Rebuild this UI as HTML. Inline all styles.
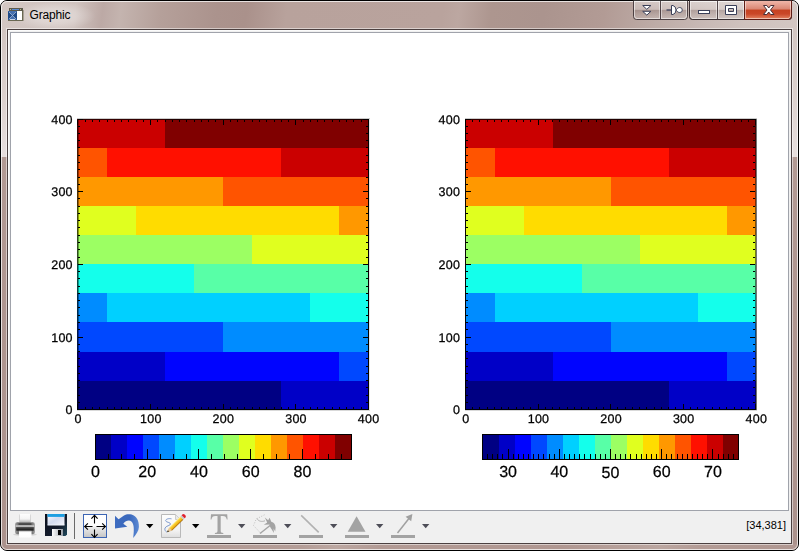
<!DOCTYPE html>
<html><head><meta charset="utf-8"><title>Graphic</title>
<style>
html,body{margin:0;padding:0;background:#fff;}
body{width:799px;height:551px;overflow:hidden;position:relative;font-family:"Liberation Sans",sans-serif;}
#win{position:absolute;left:0;top:0;width:797px;height:549px;border:1px solid #000;border-radius:7px;overflow:hidden;
 background:linear-gradient(180deg,#d0c3bf 0px,#d2c6c2 29px,#ddd2cf 100px,#e7dfde 156px,#b29a94 156px,#af9690 300px,#ab928c 549px);}
#win:after{content:"";position:absolute;left:0;top:0;right:0;bottom:0;border:1px solid rgba(255,255,255,.72);border-radius:6px;}
#tb{position:absolute;left:0;top:0;width:797px;height:28px;
 background:linear-gradient(97deg,#d3c7c3 0px,#d0c3bf 75px,#bca9a5 102px,#c4b4af 120px,#b5a09a 160px,#ab938d 215px,#aa918b 245px,#b8a29c 285px,#b9a39d 440px,#bca7a1 456px,#ad968f 488px,#ab948e 540px,#b29b95 600px,#bdaba6 650px,#c8b9b5 700px,#cfc2be 740px,#d3c7c3 797px);}
#bot{position:absolute;left:0;bottom:0;width:797px;height:6px;
 background:linear-gradient(90deg,#ab928c 0px,#b29a94 150px,#b49d97 300px,#bca7a1 335px,#b29a94 380px,#b09791 560px,#bba6a0 660px,#b39b95 700px,#b09791 797px);}
#glow{position:absolute;left:14px;top:1px;width:80px;height:28px;background:radial-gradient(ellipse at center,rgba(255,255,255,.42) 0%,rgba(255,255,255,.25) 40%,rgba(255,255,255,0) 72%);}
#client{position:absolute;left:7px;top:29px;width:783px;height:513px;border:1px solid #4b4040;background:#f0f0f0;box-shadow:0 0 0 1px rgba(255,255,255,.5);}
#client:before{content:"";position:absolute;left:0;top:0;right:0;bottom:0;border:1px solid #fbfbfb;border-right-color:#f0f0f0;border-bottom-color:#f0f0f0}
#draw{position:absolute;left:2px;top:2px;width:777px;height:477px;border:1px solid #a0a3ab;background:#fff;}
#title{position:absolute;left:29.600px;top:8px;font-size:12px;color:#000;line-height:15px;letter-spacing:-.2px;}
#status{position:absolute;right:13px;top:519px;font-size:11px;color:#000;line-height:13px;}
svg{position:absolute;left:0;top:0;}
#chart{will-change:transform;}
.ax{font-size:12.5px;letter-spacing:.25px;stroke:#000;stroke-width:.25px;font-family:"Liberation Sans",sans-serif;fill:#000}
.cb{font-size:16px;stroke:#000;stroke-width:.25px;font-family:"Liberation Sans",sans-serif;fill:#000}
</style></head><body>
<div id="win"><div id="tb"></div><div id="bot"></div><div id="glow"></div></div>
<div id="client"><div id="draw"></div></div>
<div id="title">Graphic</div>
<div id="status">[34,381]</div>
<svg id="chart" width="799" height="551" viewBox="0 0 799 551" shape-rendering="crispEdges" text-rendering="geometricPrecision">
<rect x="77" y="381" width="204" height="29" fill="#000083"/>
<rect x="281" y="381" width="88" height="29" fill="#0000c7"/>
<rect x="77" y="352" width="88" height="29" fill="#0000c7"/>
<rect x="165" y="352" width="174" height="29" fill="#0004ff"/>
<rect x="339" y="352" width="30" height="29" fill="#0048ff"/>
<rect x="77" y="322" width="146" height="30" fill="#0048ff"/>
<rect x="223" y="322" width="146" height="30" fill="#008cff"/>
<rect x="77" y="293" width="30" height="29" fill="#008cff"/>
<rect x="107" y="293" width="203" height="29" fill="#00d0ff"/>
<rect x="310" y="293" width="59" height="29" fill="#14ffeb"/>
<rect x="77" y="264" width="117" height="29" fill="#14ffeb"/>
<rect x="194" y="264" width="175" height="29" fill="#58ffa7"/>
<rect x="77" y="235" width="175" height="29" fill="#9cff63"/>
<rect x="252" y="235" width="117" height="29" fill="#e0ff1f"/>
<rect x="77" y="206" width="59" height="29" fill="#e0ff1f"/>
<rect x="136" y="206" width="203" height="29" fill="#ffdc00"/>
<rect x="339" y="206" width="30" height="29" fill="#ff9800"/>
<rect x="77" y="177" width="146" height="29" fill="#ff9800"/>
<rect x="223" y="177" width="146" height="29" fill="#ff5400"/>
<rect x="77" y="148" width="30" height="29" fill="#ff5400"/>
<rect x="107" y="148" width="174" height="29" fill="#ff1000"/>
<rect x="281" y="148" width="88" height="29" fill="#cb0000"/>
<rect x="77" y="119" width="88" height="29" fill="#cb0000"/>
<rect x="165" y="119" width="204" height="29" fill="#800000"/>
<rect x="77" y="119" width="1" height="291" fill="#000" fill-opacity="0.70"/>
<rect x="78" y="119" width="1" height="291" fill="#000" fill-opacity="0.38"/>
<rect x="368" y="119" width="1" height="291" fill="#000" fill-opacity="1.00"/>
<rect x="369" y="119" width="1" height="291" fill="#000" fill-opacity="0.10"/>
<rect x="77" y="118" width="293" height="1" fill="#000" fill-opacity="0.20"/>
<rect x="78" y="119" width="290" height="1" fill="#000" fill-opacity="0.75"/>
<rect x="78" y="409" width="290" height="1" fill="#000" fill-opacity="0.92"/>
<rect x="77" y="410" width="293" height="1" fill="#000" fill-opacity="0.15"/>
<path d="M85 409h1v-2h-1zM85 120h1v2h-1zM78 402v1h2v-1zM368 402v1h-2v-1zM92 409h1v-2h-1zM92 120h1v2h-1zM78 395v1h2v-1zM368 395v1h-2v-1zM99 409h1v-2h-1zM99 120h1v2h-1zM78 387v1h2v-1zM368 387v1h-2v-1zM107 409h1v-2h-1zM107 120h1v2h-1zM78 380v1h2v-1zM368 380v1h-2v-1zM114 409h1v-2h-1zM114 120h1v2h-1zM78 373v1h2v-1zM368 373v1h-2v-1zM121 409h1v-2h-1zM121 120h1v2h-1zM78 366v1h2v-1zM368 366v1h-2v-1zM128 409h1v-2h-1zM128 120h1v2h-1zM78 358v1h2v-1zM368 358v1h-2v-1zM136 409h1v-2h-1zM136 120h1v2h-1zM78 351v1h2v-1zM368 351v1h-2v-1zM143 409h1v-2h-1zM143 120h1v2h-1zM78 344v1h2v-1zM368 344v1h-2v-1zM150 409h1v-5h-1zM150 120h1v5h-1zM78 337v1h5v-1zM368 337v1h-5v-1zM157 409h1v-2h-1zM157 120h1v2h-1zM78 329v1h2v-1zM368 329v1h-2v-1zM165 409h1v-2h-1zM165 120h1v2h-1zM78 322v1h2v-1zM368 322v1h-2v-1zM172 409h1v-2h-1zM172 120h1v2h-1zM78 315v1h2v-1zM368 315v1h-2v-1zM179 409h1v-2h-1zM179 120h1v2h-1zM78 307v1h2v-1zM368 307v1h-2v-1zM186 409h1v-2h-1zM186 120h1v2h-1zM78 300v1h2v-1zM368 300v1h-2v-1zM194 409h1v-2h-1zM194 120h1v2h-1zM78 293v1h2v-1zM368 293v1h-2v-1zM201 409h1v-2h-1zM201 120h1v2h-1zM78 286v1h2v-1zM368 286v1h-2v-1zM208 409h1v-2h-1zM208 120h1v2h-1zM78 278v1h2v-1zM368 278v1h-2v-1zM215 409h1v-2h-1zM215 120h1v2h-1zM78 271v1h2v-1zM368 271v1h-2v-1zM223 409h1v-5h-1zM223 120h1v5h-1zM78 264v1h5v-1zM368 264v1h-5v-1zM230 409h1v-2h-1zM230 120h1v2h-1zM78 257v1h2v-1zM368 257v1h-2v-1zM237 409h1v-2h-1zM237 120h1v2h-1zM78 249v1h2v-1zM368 249v1h-2v-1zM244 409h1v-2h-1zM244 120h1v2h-1zM78 242v1h2v-1zM368 242v1h-2v-1zM252 409h1v-2h-1zM252 120h1v2h-1zM78 235v1h2v-1zM368 235v1h-2v-1zM259 409h1v-2h-1zM259 120h1v2h-1zM78 227v1h2v-1zM368 227v1h-2v-1zM266 409h1v-2h-1zM266 120h1v2h-1zM78 220v1h2v-1zM368 220v1h-2v-1zM274 409h1v-2h-1zM274 120h1v2h-1zM78 213v1h2v-1zM368 213v1h-2v-1zM281 409h1v-2h-1zM281 120h1v2h-1zM78 206v1h2v-1zM368 206v1h-2v-1zM288 409h1v-2h-1zM288 120h1v2h-1zM78 198v1h2v-1zM368 198v1h-2v-1zM295 409h1v-5h-1zM295 120h1v5h-1zM78 191v1h5v-1zM368 191v1h-5v-1zM303 409h1v-2h-1zM303 120h1v2h-1zM78 184v1h2v-1zM368 184v1h-2v-1zM310 409h1v-2h-1zM310 120h1v2h-1zM78 177v1h2v-1zM368 177v1h-2v-1zM317 409h1v-2h-1zM317 120h1v2h-1zM78 169v1h2v-1zM368 169v1h-2v-1zM324 409h1v-2h-1zM324 120h1v2h-1zM78 162v1h2v-1zM368 162v1h-2v-1zM332 409h1v-2h-1zM332 120h1v2h-1zM78 155v1h2v-1zM368 155v1h-2v-1zM339 409h1v-2h-1zM339 120h1v2h-1zM78 147v1h2v-1zM368 147v1h-2v-1zM346 409h1v-2h-1zM346 120h1v2h-1zM78 140v1h2v-1zM368 140v1h-2v-1zM353 409h1v-2h-1zM353 120h1v2h-1zM78 133v1h2v-1zM368 133v1h-2v-1zM361 409h1v-2h-1zM361 120h1v2h-1zM78 126v1h2v-1zM368 126v1h-2v-1z" fill="#000"/>
<path d="M77 119h6v1h-6zM77 409h6v1h-6zM369 119h-6v1h6zM369 409h-6v1h6zM77 119v6h1v-6zM77 410v-6h1v6zM368 119v6h1v-6zM368 410v-6h1v6z" fill="#000" fill-opacity=".8"/>
<text x="78.2" y="423.0" text-anchor="middle" class="ax">0</text>
<text x="72.8" y="414.2" text-anchor="end" class="ax">0</text>
<text x="150.8" y="423.0" text-anchor="middle" class="ax">100</text>
<text x="72.8" y="341.5" text-anchor="end" class="ax">100</text>
<text x="223.4" y="423.0" text-anchor="middle" class="ax">200</text>
<text x="72.8" y="268.8" text-anchor="end" class="ax">200</text>
<text x="296.0" y="423.0" text-anchor="middle" class="ax">300</text>
<text x="72.8" y="196.1" text-anchor="end" class="ax">300</text>
<text x="368.6" y="423.0" text-anchor="middle" class="ax">400</text>
<text x="72.8" y="124.0" text-anchor="end" class="ax">400</text>
<rect x="465" y="381" width="204" height="29" fill="#000083"/>
<rect x="669" y="381" width="87" height="29" fill="#0000c7"/>
<rect x="465" y="352" width="88" height="29" fill="#0000c7"/>
<rect x="553" y="352" width="174" height="29" fill="#0004ff"/>
<rect x="727" y="352" width="29" height="29" fill="#0048ff"/>
<rect x="465" y="322" width="146" height="30" fill="#0048ff"/>
<rect x="611" y="322" width="145" height="30" fill="#008cff"/>
<rect x="465" y="293" width="30" height="29" fill="#008cff"/>
<rect x="495" y="293" width="203" height="29" fill="#00d0ff"/>
<rect x="698" y="293" width="58" height="29" fill="#14ffeb"/>
<rect x="465" y="264" width="117" height="29" fill="#14ffeb"/>
<rect x="582" y="264" width="174" height="29" fill="#58ffa7"/>
<rect x="465" y="235" width="175" height="29" fill="#9cff63"/>
<rect x="640" y="235" width="116" height="29" fill="#e0ff1f"/>
<rect x="465" y="206" width="59" height="29" fill="#e0ff1f"/>
<rect x="524" y="206" width="203" height="29" fill="#ffdc00"/>
<rect x="727" y="206" width="29" height="29" fill="#ff9800"/>
<rect x="465" y="177" width="146" height="29" fill="#ff9800"/>
<rect x="611" y="177" width="145" height="29" fill="#ff5400"/>
<rect x="465" y="148" width="30" height="29" fill="#ff5400"/>
<rect x="495" y="148" width="174" height="29" fill="#ff1000"/>
<rect x="669" y="148" width="87" height="29" fill="#cb0000"/>
<rect x="465" y="119" width="88" height="29" fill="#cb0000"/>
<rect x="553" y="119" width="203" height="29" fill="#800000"/>
<rect x="465" y="119" width="1" height="291" fill="#000" fill-opacity="0.96"/>
<rect x="755" y="119" width="1" height="291" fill="#000" fill-opacity="0.50"/>
<rect x="756" y="119" width="1" height="291" fill="#000" fill-opacity="0.55"/>
<rect x="465" y="118" width="292" height="1" fill="#000" fill-opacity="0.20"/>
<rect x="466" y="119" width="290" height="1" fill="#000" fill-opacity="0.75"/>
<rect x="466" y="409" width="290" height="1" fill="#000" fill-opacity="0.92"/>
<rect x="465" y="410" width="292" height="1" fill="#000" fill-opacity="0.15"/>
<path d="M472 409h1v-2h-1zM472 120h1v2h-1zM466 402v1h2v-1zM755 402v1h-2v-1zM479 409h1v-2h-1zM479 120h1v2h-1zM466 395v1h2v-1zM755 395v1h-2v-1zM487 409h1v-2h-1zM487 120h1v2h-1zM466 387v1h2v-1zM755 387v1h-2v-1zM494 409h1v-2h-1zM494 120h1v2h-1zM466 380v1h2v-1zM755 380v1h-2v-1zM501 409h1v-2h-1zM501 120h1v2h-1zM466 373v1h2v-1zM755 373v1h-2v-1zM508 409h1v-2h-1zM508 120h1v2h-1zM466 366v1h2v-1zM755 366v1h-2v-1zM516 409h1v-2h-1zM516 120h1v2h-1zM466 358v1h2v-1zM755 358v1h-2v-1zM523 409h1v-2h-1zM523 120h1v2h-1zM466 351v1h2v-1zM755 351v1h-2v-1zM530 409h1v-2h-1zM530 120h1v2h-1zM466 344v1h2v-1zM755 344v1h-2v-1zM538 409h1v-5h-1zM538 120h1v5h-1zM466 337v1h5v-1zM755 337v1h-5v-1zM545 409h1v-2h-1zM545 120h1v2h-1zM466 329v1h2v-1zM755 329v1h-2v-1zM552 409h1v-2h-1zM552 120h1v2h-1zM466 322v1h2v-1zM755 322v1h-2v-1zM559 409h1v-2h-1zM559 120h1v2h-1zM466 315v1h2v-1zM755 315v1h-2v-1zM567 409h1v-2h-1zM567 120h1v2h-1zM466 307v1h2v-1zM755 307v1h-2v-1zM574 409h1v-2h-1zM574 120h1v2h-1zM466 300v1h2v-1zM755 300v1h-2v-1zM581 409h1v-2h-1zM581 120h1v2h-1zM466 293v1h2v-1zM755 293v1h-2v-1zM588 409h1v-2h-1zM588 120h1v2h-1zM466 286v1h2v-1zM755 286v1h-2v-1zM596 409h1v-2h-1zM596 120h1v2h-1zM466 278v1h2v-1zM755 278v1h-2v-1zM603 409h1v-2h-1zM603 120h1v2h-1zM466 271v1h2v-1zM755 271v1h-2v-1zM610 409h1v-5h-1zM610 120h1v5h-1zM466 264v1h5v-1zM755 264v1h-5v-1zM617 409h1v-2h-1zM617 120h1v2h-1zM466 257v1h2v-1zM755 257v1h-2v-1zM625 409h1v-2h-1zM625 120h1v2h-1zM466 249v1h2v-1zM755 249v1h-2v-1zM632 409h1v-2h-1zM632 120h1v2h-1zM466 242v1h2v-1zM755 242v1h-2v-1zM639 409h1v-2h-1zM639 120h1v2h-1zM466 235v1h2v-1zM755 235v1h-2v-1zM646 409h1v-2h-1zM646 120h1v2h-1zM466 227v1h2v-1zM755 227v1h-2v-1zM654 409h1v-2h-1zM654 120h1v2h-1zM466 220v1h2v-1zM755 220v1h-2v-1zM661 409h1v-2h-1zM661 120h1v2h-1zM466 213v1h2v-1zM755 213v1h-2v-1zM668 409h1v-2h-1zM668 120h1v2h-1zM466 206v1h2v-1zM755 206v1h-2v-1zM675 409h1v-2h-1zM675 120h1v2h-1zM466 198v1h2v-1zM755 198v1h-2v-1zM683 409h1v-5h-1zM683 120h1v5h-1zM466 191v1h5v-1zM755 191v1h-5v-1zM690 409h1v-2h-1zM690 120h1v2h-1zM466 184v1h2v-1zM755 184v1h-2v-1zM697 409h1v-2h-1zM697 120h1v2h-1zM466 177v1h2v-1zM755 177v1h-2v-1zM704 409h1v-2h-1zM704 120h1v2h-1zM466 169v1h2v-1zM755 169v1h-2v-1zM712 409h1v-2h-1zM712 120h1v2h-1zM466 162v1h2v-1zM755 162v1h-2v-1zM719 409h1v-2h-1zM719 120h1v2h-1zM466 155v1h2v-1zM755 155v1h-2v-1zM726 409h1v-2h-1zM726 120h1v2h-1zM466 147v1h2v-1zM755 147v1h-2v-1zM734 409h1v-2h-1zM734 120h1v2h-1zM466 140v1h2v-1zM755 140v1h-2v-1zM741 409h1v-2h-1zM741 120h1v2h-1zM466 133v1h2v-1zM755 133v1h-2v-1zM748 409h1v-2h-1zM748 120h1v2h-1zM466 126v1h2v-1zM755 126v1h-2v-1z" fill="#000"/>
<path d="M465 119h6v1h-6zM465 409h6v1h-6zM756 119h-6v1h6zM756 409h-6v1h6zM465 119v6h1v-6zM465 410v-6h1v6zM755 119v6h1v-6zM755 410v-6h1v6z" fill="#000" fill-opacity=".8"/>
<text x="465.9" y="423.0" text-anchor="middle" class="ax">0</text>
<text x="460.1" y="414.2" text-anchor="end" class="ax">0</text>
<text x="538.5" y="423.0" text-anchor="middle" class="ax">100</text>
<text x="460.1" y="341.5" text-anchor="end" class="ax">100</text>
<text x="611.1" y="423.0" text-anchor="middle" class="ax">200</text>
<text x="460.1" y="268.8" text-anchor="end" class="ax">200</text>
<text x="683.7" y="423.0" text-anchor="middle" class="ax">300</text>
<text x="460.1" y="196.1" text-anchor="end" class="ax">300</text>
<text x="756.3" y="423.0" text-anchor="middle" class="ax">400</text>
<text x="460.1" y="124.0" text-anchor="end" class="ax">400</text>
<rect x="95.00" y="434.00" width="16.30" height="25.00" fill="#000083"/>
<rect x="111.00" y="434.00" width="16.30" height="25.00" fill="#0000c7"/>
<rect x="127.00" y="434.00" width="16.30" height="25.00" fill="#0004ff"/>
<rect x="143.00" y="434.00" width="16.30" height="25.00" fill="#0048ff"/>
<rect x="159.00" y="434.00" width="16.30" height="25.00" fill="#008cff"/>
<rect x="175.00" y="434.00" width="16.30" height="25.00" fill="#00d0ff"/>
<rect x="191.00" y="434.00" width="16.30" height="25.00" fill="#14ffeb"/>
<rect x="207.00" y="434.00" width="16.30" height="25.00" fill="#58ffa7"/>
<rect x="223.00" y="434.00" width="16.30" height="25.00" fill="#9cff63"/>
<rect x="239.00" y="434.00" width="16.30" height="25.00" fill="#e0ff1f"/>
<rect x="255.00" y="434.00" width="16.30" height="25.00" fill="#ffdc00"/>
<rect x="271.00" y="434.00" width="16.30" height="25.00" fill="#ff9800"/>
<rect x="287.00" y="434.00" width="16.30" height="25.00" fill="#ff5400"/>
<rect x="303.00" y="434.00" width="16.30" height="25.00" fill="#ff1000"/>
<rect x="319.00" y="434.00" width="16.30" height="25.00" fill="#cb0000"/>
<rect x="335.00" y="434.00" width="16.00" height="25.00" fill="#800000"/>
<rect x="95.5" y="434.5" width="256" height="25" fill="none" stroke="#000" stroke-width="1"/>
<path d="M95 460h1v-11h-1zM108 460h1v-6h-1zM121 460h1v-6h-1zM134 460h1v-6h-1zM147 460h1v-11h-1zM160 460h1v-6h-1zM173 460h1v-6h-1zM186 460h1v-6h-1zM198 460h1v-11h-1zM211 460h1v-6h-1zM224 460h1v-6h-1zM237 460h1v-6h-1zM250 460h1v-11h-1zM263 460h1v-6h-1zM276 460h1v-6h-1zM289 460h1v-6h-1zM302 460h1v-11h-1zM315 460h1v-6h-1zM328 460h1v-6h-1zM341 460h1v-6h-1z" fill="#000"/>
<text x="95.5" y="477.0" text-anchor="middle" class="cb">0</text>
<text x="147.2" y="477.0" text-anchor="middle" class="cb">20</text>
<text x="198.9" y="477.0" text-anchor="middle" class="cb">40</text>
<text x="250.7" y="477.0" text-anchor="middle" class="cb">60</text>
<text x="302.4" y="477.0" text-anchor="middle" class="cb">80</text>
<rect x="483.00" y="434.00" width="16.30" height="25.00" fill="#000083"/>
<rect x="499.00" y="434.00" width="16.30" height="25.00" fill="#0000c7"/>
<rect x="515.00" y="434.00" width="16.30" height="25.00" fill="#0004ff"/>
<rect x="531.00" y="434.00" width="16.30" height="25.00" fill="#0048ff"/>
<rect x="547.00" y="434.00" width="16.30" height="25.00" fill="#008cff"/>
<rect x="563.00" y="434.00" width="16.30" height="25.00" fill="#00d0ff"/>
<rect x="579.00" y="434.00" width="16.30" height="25.00" fill="#14ffeb"/>
<rect x="595.00" y="434.00" width="16.30" height="25.00" fill="#58ffa7"/>
<rect x="611.00" y="434.00" width="16.30" height="25.00" fill="#9cff63"/>
<rect x="627.00" y="434.00" width="16.30" height="25.00" fill="#e0ff1f"/>
<rect x="643.00" y="434.00" width="16.30" height="25.00" fill="#ffdc00"/>
<rect x="659.00" y="434.00" width="16.30" height="25.00" fill="#ff9800"/>
<rect x="675.00" y="434.00" width="16.30" height="25.00" fill="#ff5400"/>
<rect x="691.00" y="434.00" width="16.30" height="25.00" fill="#ff1000"/>
<rect x="707.00" y="434.00" width="16.30" height="25.00" fill="#cb0000"/>
<rect x="723.00" y="434.00" width="15.00" height="25.00" fill="#800000"/>
<rect x="482.5" y="434.5" width="256" height="25" fill="none" stroke="#000" stroke-width="1"/>
<path d="M482 460h1v-6h-1zM487 460h1v-6h-1zM492 460h1v-6h-1zM497 460h1v-6h-1zM502 460h1v-6h-1zM508 460h1v-11h-1zM513 460h1v-6h-1zM518 460h1v-6h-1zM523 460h1v-6h-1zM528 460h1v-6h-1zM533 460h1v-6h-1zM538 460h1v-6h-1zM543 460h1v-6h-1zM549 460h1v-6h-1zM554 460h1v-6h-1zM559 460h1v-11h-1zM564 460h1v-6h-1zM569 460h1v-6h-1zM574 460h1v-6h-1zM579 460h1v-6h-1zM584 460h1v-6h-1zM590 460h1v-6h-1zM595 460h1v-6h-1zM600 460h1v-6h-1zM605 460h1v-6h-1zM610 460h1v-11h-1zM615 460h1v-6h-1zM620 460h1v-6h-1zM625 460h1v-6h-1zM630 460h1v-6h-1zM636 460h1v-6h-1zM641 460h1v-6h-1zM646 460h1v-6h-1zM651 460h1v-6h-1zM656 460h1v-6h-1zM661 460h1v-11h-1zM666 460h1v-6h-1zM671 460h1v-6h-1zM677 460h1v-6h-1zM682 460h1v-6h-1zM687 460h1v-6h-1zM692 460h1v-6h-1zM697 460h1v-6h-1zM702 460h1v-6h-1zM707 460h1v-6h-1zM712 460h1v-11h-1zM718 460h1v-6h-1zM723 460h1v-6h-1zM728 460h1v-6h-1zM733 460h1v-6h-1zM738 460h1v-6h-1z" fill="#000"/>
<text x="508.1" y="477.0" text-anchor="middle" class="cb">30</text>
<text x="559.3" y="477.0" text-anchor="middle" class="cb">40</text>
<text x="610.5" y="478.0" text-anchor="middle" class="cb">50</text>
<text x="661.7" y="477.0" text-anchor="middle" class="cb">60</text>
<text x="712.9" y="477.0" text-anchor="middle" class="cb">70</text>
</svg>
<svg width="799" height="551" viewBox="0 0 799 551">
<defs>
<linearGradient id="gb" x1="0" y1="0" x2="0" y2="1">
<stop offset="0" stop-color="#fff" stop-opacity=".38"/><stop offset=".47" stop-color="#fff" stop-opacity=".22"/>
<stop offset=".5" stop-color="#3a2020" stop-opacity=".16"/><stop offset="1" stop-color="#fff" stop-opacity=".12"/>
</linearGradient>
<linearGradient id="gr" x1="0" y1="0" x2="0" y2="1">
<stop offset="0" stop-color="#f0b6a9"/><stop offset=".45" stop-color="#da8673"/>
<stop offset=".5" stop-color="#c64221"/><stop offset=".72" stop-color="#ca4728"/><stop offset="1" stop-color="#e38462"/>
</linearGradient>
<linearGradient id="gsel" x1="0" y1="0" x2="0" y2="1">
<stop offset="0" stop-color="#fff"/><stop offset=".5" stop-color="#fdfdfd"/><stop offset=".55" stop-color="#ececec"/><stop offset="1" stop-color="#c4c4c4"/>
</linearGradient>
</defs>
<!-- app icon -->
<g shape-rendering="crispEdges">
<rect x="9" y="8" width="14" height="3" fill="#5c5a4c"/>
<rect x="12" y="9" width="7" height="1" fill="#5b8bd0"/>
<rect x="10" y="9" width="1" height="1" fill="#b8b890"/><rect x="20" y="9" width="1" height="1" fill="#b8b890"/>
<rect x="8" y="11" width="15" height="10" fill="#6a6852"/>
<rect x="23" y="10" width="1" height="11" fill="#6a6852" opacity=".45"/>
<rect x="8" y="11" width="9" height="9" fill="#2c5a98"/>
<rect x="17" y="11" width="5" height="9" fill="#fff"/>
</g>
<path d="M8 11L12.500 15.500L8 20zM17 11L12.500 15.500L17 20z" fill="#1f4a88"/>
<path d="M8 11H17L12.500 15.500zM8 20H17L12.500 15.500z" fill="#456fae"/>
<path d="M9 12l7 7M16 12l-7 7" stroke="#b4c4de" stroke-width=".9" fill="none" opacity=".75"/>
<path d="M10 19.500h5" stroke="#e4eaf4" stroke-width="1" fill="none" opacity=".85"/>
<!-- group 1 -->
<path d="M633.5 0.5V16.5a3 3 0 0 0 3 3H684.5a3 3 0 0 0 3-3V0.5" fill="url(#gb)" stroke="#3b2f33" stroke-opacity=".85" stroke-width="1"/>
<path d="M634.5 1.5V16a2.5 2.5 0 0 0 2.5 2.5H684a2.5 2.5 0 0 0 2.500-2.500V1.500" fill="none" stroke="#fff" stroke-opacity=".55" stroke-width="1"/>
<path d="M660.5 1V19" stroke="#3b2f33" stroke-opacity=".85" stroke-width="1"/>
<path d="M659.500 1.500V18M661.500 1.500V18" stroke="#fff" stroke-opacity=".45" stroke-width="1"/>
<!-- double chevron -->
<path d="M642.700 5.500h8.200l-4.100 3.800zM642.700 11.300h8.200l-4.100 3.800z" fill="#fff" stroke="#3a3f58" stroke-width="1" stroke-linejoin="miter"/>
<!-- pin -->
<path d="M666.500 10h5" stroke="#3a3f58" stroke-width="1.300"/>
<path d="M671.500 5.500h1.500q3 1 3 4.500t-3 4.500h-1.500z" fill="#fff" stroke="#3a3f58" stroke-width="1"/>
<path d="M676 10c1.200-1.200 1.800-2.500 3.800-2.500a2.500 2.500 0 0 1 0 5c-2 0-2.600-1.300-3.800-2.500z" fill="#fff" stroke="#3a3f58" stroke-width=".9"/>
<!-- group 2 -->
<path d="M689.500 0.500V16.500a3 3 0 0 0 3 3H788.500a3 3 0 0 0 3-3V0.500z" fill="url(#gb)" stroke="#3b2f33" stroke-opacity=".85" stroke-width="1"/>
<path d="M745 1H791V16.500a2.500 2.500 0 0 1-2.500 2.500H745z" fill="url(#gr)"/>
<path d="M690.500 1.500V16a2.500 2.500 0 0 0 2.500 2.500H716.500V1.500M718.500 1.500V18.500H743.500V1.500M745.500 1.500V18.500H788a2.500 2.500 0 0 0 2.500-2.500V1.500" fill="none" stroke="#fff" stroke-opacity=".5" stroke-width="1"/>
<path d="M717.500 1V19M744.500 1V19" stroke="#3b2f33" stroke-opacity=".85" stroke-width="1"/>
<path d="M689.500 0.500V16.500a3 3 0 0 0 3 3H788.500a3 3 0 0 0 3-3V0.500" fill="none" stroke="#3b2f33" stroke-opacity=".85" stroke-width="1"/>
<path d="M744.500 0.500V19.500H788.500a3 3 0 0 0 3-3V0.500" fill="none" stroke="#5e1c14" stroke-width="1"/>
<!-- minimise -->
<rect x="698.500" y="10.500" width="11" height="3" fill="#fff" stroke="#3a3f58" stroke-width="1"/>
<!-- maximise -->
<path d="M725.500 5.500h11v9h-11zM728.500 8.500h5v3h-5z" fill="#fff" fill-rule="evenodd" stroke="#3a3f58" stroke-width="1"/>
<!-- close X -->
<path d="M763.500 5.500h3.400l1.850 2.500 1.850-2.500h3.400l-3.500 4.500 3.500 4.500h-3.400l-1.850-2.500-1.850 2.500h-3.400l3.500-4.500z" fill="#fff" stroke="#4a3038" stroke-width="1" stroke-linejoin="round"/>
<defs>
<linearGradient id="pg1" x1="0" y1="0" x2="0" y2="1"><stop offset="0" stop-color="#9a9a9a"/><stop offset=".35" stop-color="#6e6e6e"/><stop offset=".6" stop-color="#3c3c3c"/><stop offset="1" stop-color="#8a8a8a"/></linearGradient>
<linearGradient id="pg2" x1="0" y1="0" x2="1" y2="0"><stop offset="0" stop-color="#fff"/><stop offset=".6" stop-color="#fafafa"/><stop offset="1" stop-color="#c8c8c8"/></linearGradient>
<linearGradient id="fl1" x1="0" y1="0" x2="1" y2="1"><stop offset="0" stop-color="#0a0f1c"/><stop offset=".6" stop-color="#141c2c"/><stop offset="1" stop-color="#1f4a5c"/></linearGradient>
<linearGradient id="fl2" x1="0" y1="0" x2="1" y2="1"><stop offset="0" stop-color="#fafcff"/><stop offset=".5" stop-color="#d4dcf0"/><stop offset="1" stop-color="#f4f6fc"/></linearGradient>
<linearGradient id="fl3" x1="0" y1="0" x2="1" y2="0"><stop offset="0" stop-color="#fff"/><stop offset="1" stop-color="#9aa0a8"/></linearGradient>
<linearGradient id="un1" x1="0" y1="0" x2="1" y2="0"><stop offset="0" stop-color="#3e6cc0"/><stop offset=".6" stop-color="#3a68bc"/><stop offset="1" stop-color="#5c8ad4"/></linearGradient>
<linearGradient id="pn1" x1="0" y1="0" x2="1" y2="1"><stop offset="0" stop-color="#ffe060"/><stop offset=".5" stop-color="#f6c21c"/><stop offset="1" stop-color="#b87808"/></linearGradient>
<linearGradient id="pp1" x1="0" y1="0" x2="0" y2="1"><stop offset="0" stop-color="#fdfdfd"/><stop offset=".7" stop-color="#f2f2f2"/><stop offset="1" stop-color="#dedede"/></linearGradient>
</defs>
<!-- printer -->
<g>
<linearGradient id="pr1" x1="0" y1="0" x2="0" y2="1"><stop offset="0" stop-color="#fdfdfd"/><stop offset=".55" stop-color="#f4f4f4"/><stop offset="1" stop-color="#a8a8a8"/></linearGradient>
<linearGradient id="pr2" x1="0" y1="0" x2="1" y2="0"><stop offset="0" stop-color="#a6a6a6"/><stop offset=".12" stop-color="#7c7c7c"/><stop offset=".88" stop-color="#7c7c7c"/><stop offset="1" stop-color="#a6a6a6"/></linearGradient>
<linearGradient id="pr3" x1="0" y1="0" x2="0" y2="1"><stop offset="0" stop-color="#f0f0f0"/><stop offset=".3" stop-color="#fff"/><stop offset="1" stop-color="#fcfcfc"/></linearGradient>
<ellipse cx="25" cy="534.600" rx="12" ry="1.200" fill="#000" opacity=".13"/>
<path d="M19 523V515.500q0-1.500 1.500-1.500H29.500q1.500 0 1.500 1.500V523z" fill="#c4c4c4" opacity=".8"/>
<path d="M19.800 523V514H30.200V523z" fill="url(#pr1)"/>
<rect x="15" y="522.300" width="20" height="12" rx="2.200" fill="url(#pr2)"/>
<rect x="18.500" y="523.300" width="13" height="1.500" fill="#333" opacity=".85"/>
<rect x="15.600" y="525.300" width="18.800" height="1.500" fill="#d0d0d0" opacity=".9"/>
<rect x="16.300" y="527.400" width="17.400" height="3.300" fill="#262626"/>
<rect x="16.300" y="527.400" width="17.400" height="1" fill="#555"/>
<path d="M19 531h12.500v5.800q0 .7-.7.700H19.700q-.7 0-.700-.700z" fill="url(#pr3)"/>
<rect x="19" y="530.600" width="12.500" height=".9" fill="#9a9a9a" opacity=".7"/>
</g>
<!-- floppy -->
<g>
<path d="M45 514H67V534.500L65.500 536H45z" fill="url(#fl1)"/>
<rect x="47.500" y="514" width="17" height="11.200" fill="url(#fl2)"/>
<rect x="47.500" y="514" width="17" height="2.900" fill="#1d9fe2"/>
<rect x="47.500" y="524.600" width="17" height=".8" fill="#eef2fa"/>
<rect x="52" y="529" width="11" height="7" fill="url(#fl3)"/>
<rect x="58" y="530" width="3" height="5" fill="#000"/>
</g>
<!-- separator -->
<rect x="74" y="513" width="1" height="26" fill="#6a6a6a" shape-rendering="crispEdges"/>
<!-- selected tool -->
<rect x="83.500" y="514.500" width="23" height="23" fill="url(#gsel)" stroke="#3c65b4" stroke-width="1"/>
<g stroke="#000" stroke-width="1.100" fill="none" stroke-linecap="butt">
<path d="M94.500 515.200V523.500M94.500 529.500V537.500M84.600 526.500H92.500M96.500 526.500H105.500"/>
<path d="M91.400 518.600L94.500 515.400L97.600 518.600M91.400 534.200L94.500 537.400L97.600 534.200M87.900 523.400L84.700 526.500L87.900 529.600M102.200 523.400L105.400 526.500L102.200 529.600"/>
</g>
<!-- undo -->
<path d="M115 515.700L115 528.600L127.300 526.800L123.300 523.800C125.500 520.700 129.300 519.600 131.400 521.500C133.900 523.800 134.400 528.500 133.200 537.900C136.300 534.300 138.700 531 138.900 527C139.200 521 136.600 516 131.600 514.600C128.600 513.800 126 514.300 124 515.400L118.600 519.300z" fill="url(#un1)"/>
<!-- dropdowns -->
<g fill="#000"><path d="M146 524h7.400l-3.700 4.200z"/><path d="M192 524h7.400l-3.700 4.200z"/></g>
<g fill="#4e4e58"><path d="M238 524h7.400l-3.700 4.200z"/><path d="M284 524h7.400l-3.700 4.200z"/><path d="M330 524h7.400l-3.700 4.200z"/><path d="M376 524h7.400l-3.700 4.200z"/><path d="M422 524h7.400l-3.700 4.200z"/></g>
<!-- page + pencil -->
<path d="M161.500 514.500H175.500L180.500 519.500V537.500H161.500z" fill="url(#pp1)" stroke="#b9b9b9" stroke-width="1"/>
<path d="M175.500 514.500V519.500H180.500" fill="#e8e8e8" stroke="#c4c4c4" stroke-width=".8"/>
<path d="M171.500 518.800c-3-.6-6 .4-5.800 2 .3 1.800 4.800 1.200 4.800 3.200 0 1.800-4.500 1.400-5.500 4.200-.6 1.800.6 3.200 1.800 4" fill="none" stroke="#6f8fc8" stroke-width=".9"/>
<g>
<linearGradient id="pn2" gradientUnits="userSpaceOnUse" x1="169.200" y1="527.400" x2="172.100" y2="530.400"><stop offset="0" stop-color="#fff3a8"/><stop offset=".28" stop-color="#fbd338"/><stop offset=".7" stop-color="#f1b416"/><stop offset="1" stop-color="#a2660a"/></linearGradient>
<path d="M167 532.300L169.200 527.400L180.300 516.600L183.300 519.700L172.100 530.400z" fill="url(#pn2)"/>
<path d="M167 532.300L169.200 527.400L172.100 530.400z" fill="#e8c8a0"/>
<path d="M167 532.300L167.900 530.200L169.100 531.400z" fill="#222"/>
<path d="M180.300 516.600L181.600 515.300L184.700 518.300L183.300 519.700z" fill="#c8c8c8"/>
<path d="M181.600 515.300L182.600 514.300Q183.600 513.600 184.600 514.600L185.500 515.500Q186.300 516.500 185.500 517.400L184.700 518.300z" fill="#e0202c"/>
</g>
<!-- T -->
<g fill="#a3a3a3">
<path d="M211 514.200H227.200L227.600 519.500H226.800C226.300 516.900 225.200 515.900 222.800 515.900H220.700V530.600C220.700 532.500 221.300 533 223.300 533.100V533.900H214.900V533.100C216.900 533 217.500 532.500 217.500 530.600V515.900H215.400C213 515.900 211.900 516.900 211.400 519.500H210.600z"/>
<rect x="207" y="535" width="24" height="3"/>
<rect x="253" y="535" width="24" height="3"/>
<rect x="299" y="535" width="24" height="3"/>
<rect x="345" y="535" width="24" height="3"/>
<rect x="391" y="535" width="24" height="3"/>
</g>
<!-- freehand / splat -->
<g>
<path d="M264.500 514.800L256.200 519L253.500 525.500L261 533.500" fill="none" stroke="#b4b4b4" stroke-width=".8" stroke-dasharray="1 1.600"/>
<path d="M257 518.500C258.500 521.500 262 522 265 520.800" fill="none" stroke="#b0b0b0" stroke-width="1"/>
<path d="M260 533.500L272 524" stroke="#a3a3a3" stroke-width="1.400" fill="none"/>
<path d="M264.800 517.500L268.200 520.300L269.600 517.800L271.300 521.800C274 522.500 275.500 524.500 275.600 527.500L275.200 531.500L273.600 528.600L273.900 533L271.600 529.200C270.300 527.500 269.600 526 269.500 524.500L263.800 524.800L267.200 522.600z" fill="#a3a3a3"/>
</g>
<!-- line -->
<path d="M301.200 515.400L318.700 532.400" stroke="#b2b2b2" stroke-width="1.600" fill="none"/>
<!-- triangle -->
<path d="M356.600 516.300L365.500 531.800H347.700z" fill="#a3a3a3"/>
<!-- arrow -->
<path d="M397.500 533L410.300 516.800" stroke="#a0a0a0" stroke-width="1.500" fill="none"/>
<path d="M412.400 514L411.200 521.200L405.600 516.800z" fill="#a0a0a0"/>

</svg>
</body></html>
